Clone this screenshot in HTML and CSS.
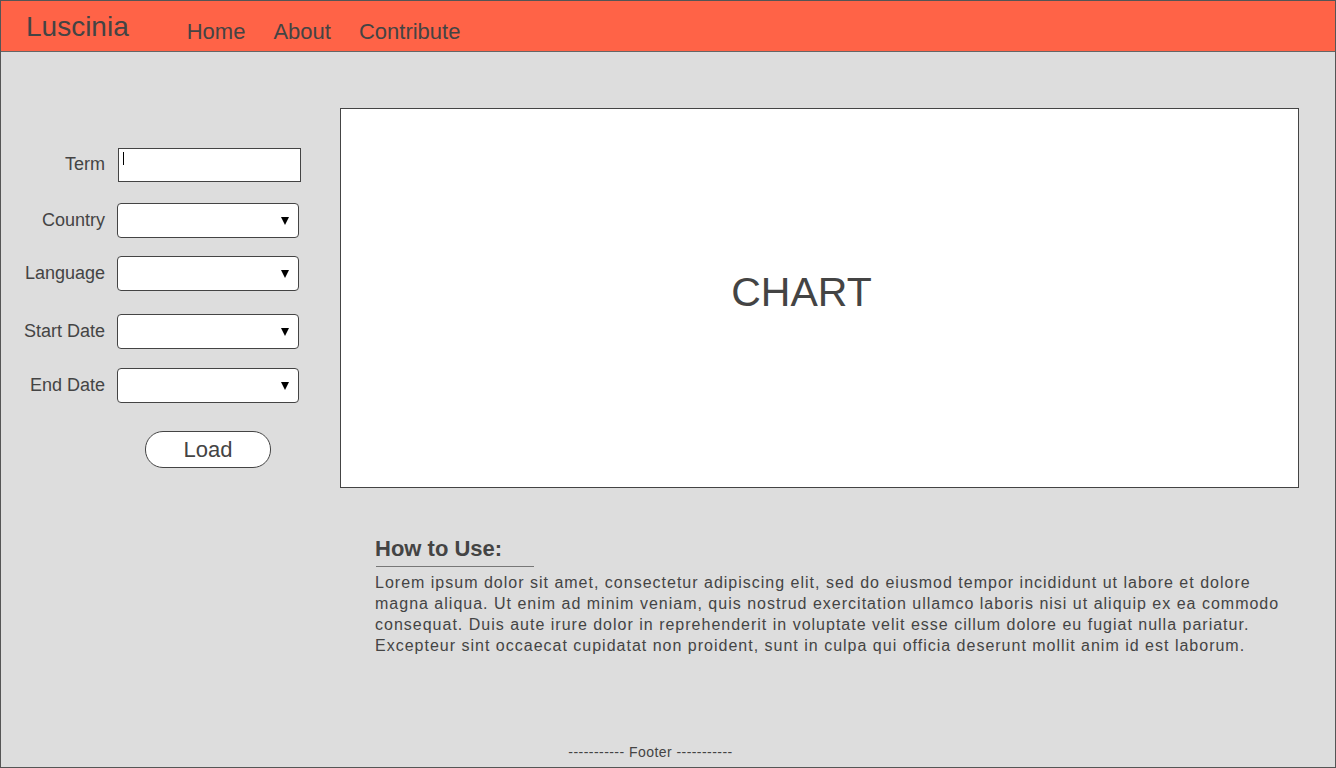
FILE: index.html
```html
<!DOCTYPE html>
<html lang="en">
<head>
<meta charset="utf-8">
<title>Luscinia</title>
<link rel="stylesheet" href="styles.css">
</head>
<body>
<div class="frame">
  <header class="topbar">
    <div class="logo">Luscinia</div>
    <nav class="nav">
      <a class="nav-link">Home</a>
      <a class="nav-link">About</a>
      <a class="nav-link">Contribute</a>
    </nav>
  </header>
  <main class="main">
    <aside class="form">
      <div class="row row-term">
        <label class="label">Term</label>
        <div class="textbox"><span class="caret"></span></div>
      </div>
      <div class="row row-country">
        <label class="label">Country</label>
        <div class="select"><span class="arrow"></span></div>
      </div>
      <div class="row row-language">
        <label class="label">Language</label>
        <div class="select"><span class="arrow"></span></div>
      </div>
      <div class="row row-start">
        <label class="label">Start Date</label>
        <div class="select"><span class="arrow"></span></div>
      </div>
      <div class="row row-end">
        <label class="label">End Date</label>
        <div class="select"><span class="arrow"></span></div>
      </div>
      <div class="row row-load">
        <button class="load-btn">Load</button>
      </div>
    </aside>
    <section class="content">
      <div class="chart"><span class="chart-label">CHART</span></div>
      <div class="howto">
        <h2 class="howto-title">How to Use:</h2>
        <div class="howto-rule"></div>
        <p class="howto-text">Lorem ipsum dolor sit amet, consectetur adipiscing elit, sed do eiusmod tempor incididunt ut labore et dolore magna aliqua. Ut enim ad minim veniam, quis nostrud exercitation ullamco laboris nisi ut aliquip ex ea commodo consequat. Duis aute irure dolor in reprehenderit in voluptate velit esse cillum dolore eu fugiat nulla pariatur. Excepteur sint occaecat cupidatat non proident, sunt in culpa qui officia deserunt mollit anim id est laborum.</p>
      </div>
    </section>
  </main>
  <footer class="footer">----------- Footer -----------</footer>
</div>
</body>
</html>
```

FILE: styles.css
```css
* { box-sizing: border-box; }

html, body {
  margin: 0;
  padding: 0;
}

body {
  font-family: "Liberation Sans", Arial, sans-serif;
  color: #444;
}

.frame {
  width: 1336px;
  height: 768px;
  border: 1px solid #555;
  background: #dddddd;
  display: flex;
  flex-direction: column;
  overflow: hidden;
}

.topbar {
  height: 51px;
  flex: none;
  background: #ff6347;
  border-bottom: 1px solid #666;
  display: flex;
  align-items: flex-start;
  padding-left: 25px;
}

.logo {
  font-size: 28px;
  line-height: 28px;
  margin-top: 12px;
}

.nav {
  display: flex;
  gap: 28px;
  margin-left: 58px;
  margin-top: 20px;
}

.nav-link {
  font-size: 22px;
  line-height: 22px;
  color: #444;
}

.main {
  flex: 1;
  display: flex;
  align-items: flex-start;
}

.form {
  width: 339px;
  flex: none;
  padding-top: 96px;
  display: flex;
  flex-direction: column;
}

.row {
  display: flex;
  align-items: center;
}

.row-country { margin-top: 21px; }
.row-language { margin-top: 18px; }
.row-start { margin-top: 23px; }
.row-end { margin-top: 19px; }
.row-load { margin-top: 28px; }

.label {
  width: 104px;
  text-align: right;
  font-size: 18px;
  line-height: 22px;
  margin-right: 12px;
  margin-bottom: 2px;
}

.textbox {
  width: 183px;
  height: 34px;
  margin-left: 1px;
  background: #fff;
  border: 1px solid #444;
  padding: 3px 0 0 4px;
}

.caret {
  display: block;
  width: 1px;
  height: 13px;
  background: #000;
}

.select {
  width: 182px;
  height: 35px;
  background: #fff;
  border: 1px solid #444;
  border-radius: 4px;
  display: flex;
  align-items: center;
  justify-content: flex-end;
  padding-right: 9px;
}

.arrow {
  width: 0;
  height: 0;
  border-left: 4.5px solid transparent;
  border-right: 4.5px solid transparent;
  border-top: 8px solid #000;
  margin-top: 1px;
}

.load-btn {
  margin-left: 144px;
  width: 126px;
  height: 37px;
  background: #fff;
  border: 1px solid #444;
  border-radius: 18px;
  font-family: "Liberation Sans", Arial, sans-serif;
  font-size: 22px;
  line-height: 22px;
  color: #444;
  padding: 0;
}

.content {
  padding-top: 56px;
  width: 959px;
  flex: none;
}

.chart {
  width: 959px;
  height: 380px;
  background: #fff;
  border: 1px solid #444;
  display: flex;
  align-items: center;
  justify-content: center;
  padding-right: 36px;
  padding-bottom: 12px;
}

.chart-label {
  font-size: 41px;
  line-height: 46px;
}

.howto {
  margin-left: 35px;
  margin-top: 48px;
}

.howto-title {
  margin: 0;
  font-size: 22px;
  line-height: 26px;
  font-weight: bold;
}

.howto-rule {
  width: 158px;
  height: 1px;
  background: #777;
  margin-top: 4px;
  margin-left: 1px;
}

.howto-text {
  margin: 5px 0 0 0;
  width: 920px;
  font-size: 16px;
  line-height: 21px;
  letter-spacing: 1px;
}

.footer {
  flex: none;
  height: 25px;
  padding-bottom: 5px;
  padding-right: 35px;
  text-align: center;
  font-size: 14px;
  line-height: 20px;
  letter-spacing: 0.45px;
}
```
